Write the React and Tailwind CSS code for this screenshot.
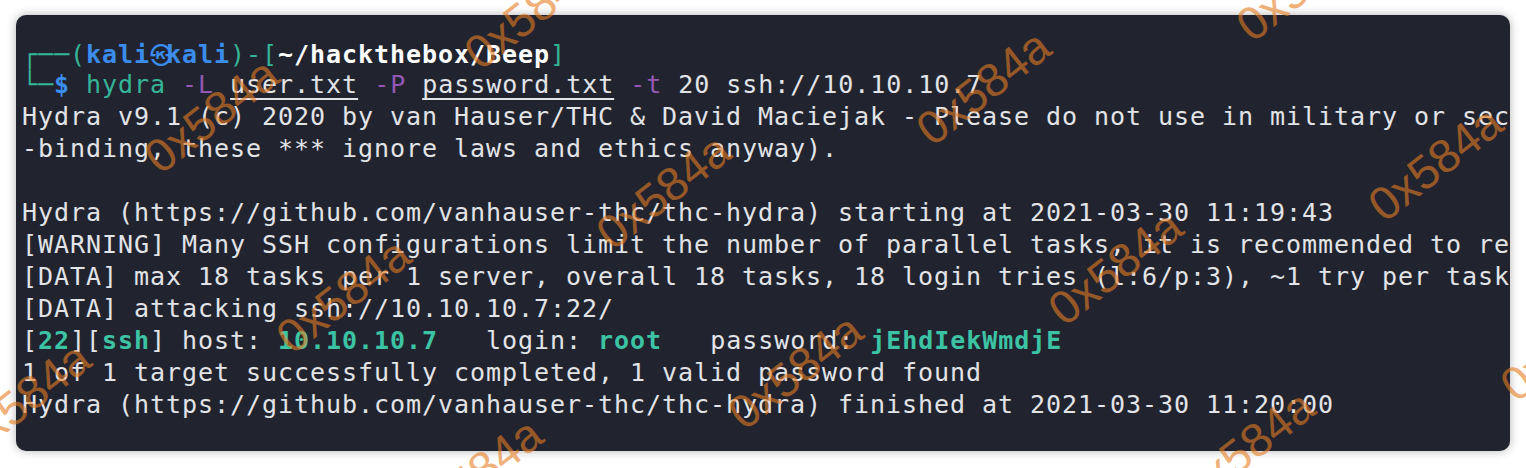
import React from 'react';

const teal = 'text-[#35b597]';
const tealBold = 'text-[#3cc3a3] font-bold';
const purple = 'text-[#9557b5]';
const blue = 'text-[#3b8ded] font-bold';

const Line = ({ children }) => (
  <div className="h-[32px] leading-[32px] whitespace-pre">{children}</div>
);

// watermark lattice: origin + i*a + j*b
const marks = [];
for (let i = -1; i <= 3; i++) {
  for (let j = -3; j <= 2; j++) {
    const x = 983 + i * 132 + j * 452;
    const y = 87 + i * 180 + j * 76;
    if (x > -80 && x < 1610 && y > -60 && y < 520) marks.push({ x, y });
  }
}

const Watermarks = () => (
  <div className="absolute inset-0 pointer-events-none overflow-hidden">
    {marks.map((m, k) => (
      <span
        key={k}
        className="absolute -translate-x-1/2 -translate-y-1/2 -rotate-[38deg] text-[47px] leading-none text-[rgba(230,124,32,0.62)] whitespace-nowrap font-['Liberation_Sans',Arial,sans-serif]"
        style={{ left: m.x, top: m.y }}
      >
        0x584a
      </span>
    ))}
  </div>
);

export default function App() {
  return (
    <div className="relative w-[1526px] h-[468px] bg-white overflow-hidden">
      <div className="pt-[15px] pl-[16px]">
        <div className="w-[1494px] h-[436px] rounded-[10px] bg-[#21242f] shadow-[0_0_10px_rgba(0,0,0,0.3)] overflow-hidden pt-[22px] pl-[6px] text-[25px] tracking-[0.95px] text-[#e2e4e8] font-['DejaVu_Sans_Mono','Liberation_Mono',monospace]">
          <Line>
            <span className={teal}>┌──(</span>
            <span className={blue}>kali</span>
            <span className="inline-block w-[16px] text-center text-[22px] tracking-normal text-[#3b8ded] font-['Noto_Sans_CJK_JP',sans-serif]">㉿</span>
            <span className={blue}>kali</span>
            <span className={teal}>)-[</span>
            <span className="font-bold text-white">~/hackthebox/Beep</span>
            <span className={teal}>]</span>
          </Line>
          <Line>
            <span className={teal}>└─</span>
            <span className={blue}>$</span>{' '}
            <span className={teal}>hydra</span>{' '}
            <span className={purple}>-L</span>{' '}
            <span className="underline decoration-[1.5px] underline-offset-[5px]">user.txt</span>{' '}
            <span className={purple}>-P</span>{' '}
            <span className="underline decoration-[1.5px] underline-offset-[5px]">password.txt</span>{' '}
            <span className={purple}>-t</span> 20 ssh://10.10.10.7
          </Line>
          <Line>Hydra v9.1 (c) 2020 by van Hauser/THC &amp; David Maciejak - Please do not use in military or sec</Line>
          <Line>-binding, these *** ignore laws and ethics anyway).</Line>
          <Line> </Line>
          <Line>Hydra (https://github.com/vanhauser-thc/thc-hydra) starting at 2021-03-30 11:19:43</Line>
          <Line>[WARNING] Many SSH configurations limit the number of parallel tasks, it is recommended to re</Line>
          <Line>[DATA] max 18 tasks per 1 server, overall 18 tasks, 18 login tries (l:6/p:3), ~1 try per task</Line>
          <Line>[DATA] attacking ssh://10.10.10.7:22/</Line>
          <Line>
            [<span className={tealBold}>22</span>][<span className={tealBold}>ssh</span>] host: <span className={tealBold}>10.10.10.7</span>   login: <span className={tealBold}>root</span>   password: <span className={tealBold}>jEhdIekWmdjE</span>
          </Line>
          <Line>1 of 1 target successfully completed, 1 valid password found</Line>
          <Line>Hydra (https://github.com/vanhauser-thc/thc-hydra) finished at 2021-03-30 11:20:00</Line>
        </div>
      </div>
      <Watermarks />
    </div>
  );
}
